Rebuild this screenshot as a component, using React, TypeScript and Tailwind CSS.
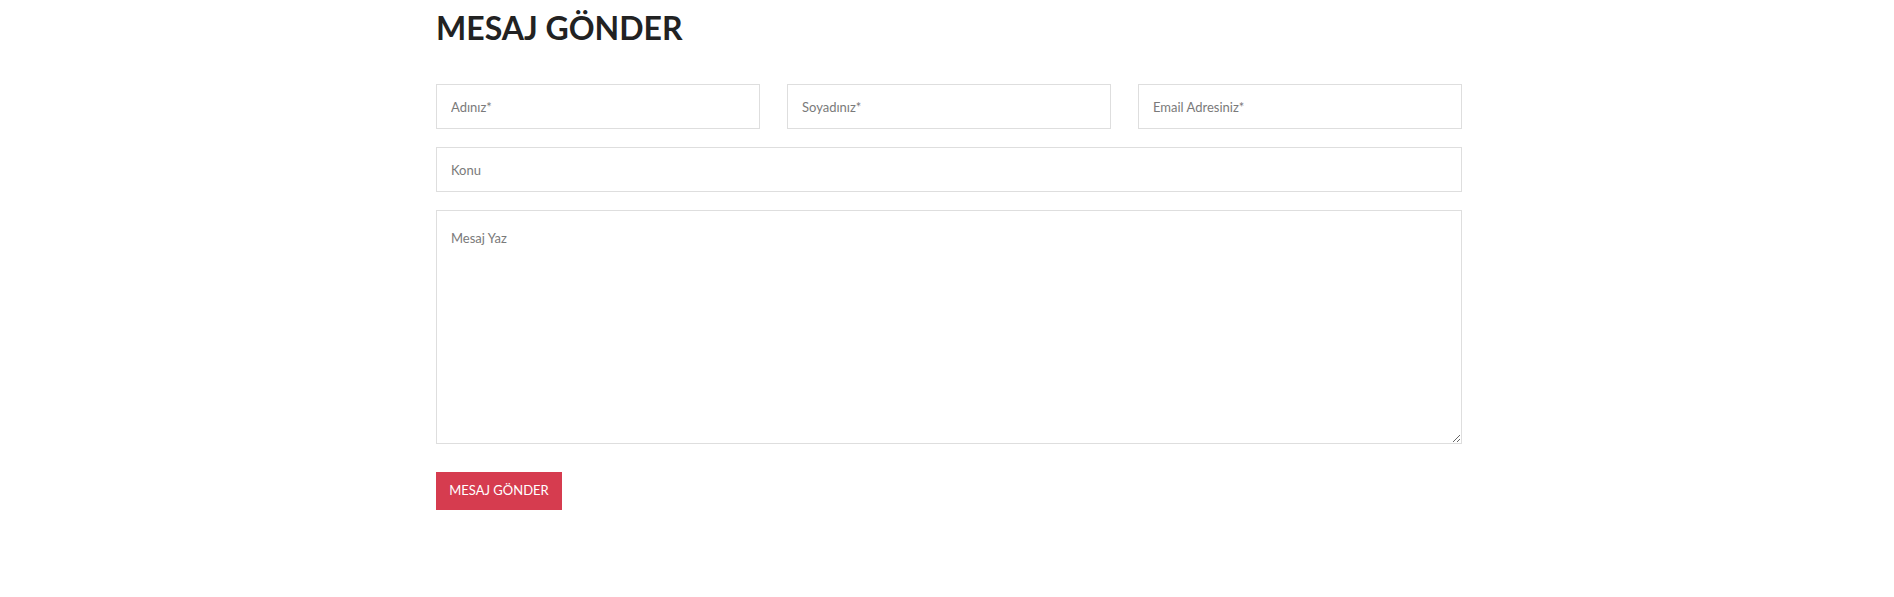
import type { FC } from "react";

const inputClass =
  "h-[45px] w-full border border-[#dedede] bg-white px-[14px] text-[13px] text-[#555] outline-none placeholder:text-[#7a7a7a]";

const App: FC = () => {
  return (
    <div className="min-h-[597px] bg-white font-['Lato','Open_Sans',sans-serif]">
      <div className="mx-auto w-[1030px] pl-[4px] pt-[8px]">
        <h2 className="text-[32px] font-bold leading-[40px] text-[#222]">MESAJ GÖNDER</h2>
        <form className="mt-[36px] flex flex-col gap-[18px]" onSubmit={(e) => e.preventDefault()}>
          <div className="grid grid-cols-3 gap-[27px]">
            <input className={inputClass} placeholder="Adınız*" />
            <input className={inputClass} placeholder="Soyadınız*" />
            <input className={inputClass} placeholder="Email Adresiniz*" />
          </div>
          <input className={`${inputClass} h-[44px]`} placeholder="Konu" />
          <textarea
            className="h-[234px] w-full border border-[#dedede] bg-white px-[14px] pt-[18px] pb-[14px] text-[13px] text-[#555] outline-none placeholder:text-[#7a7a7a]"
            placeholder="Mesaj Yaz"
          />
          <div className="mt-[10px]">
            <button
              type="submit"
              className="h-[38px] w-[126px] bg-[#d63c4f] text-[13px] uppercase text-white">
              Mesaj Gönder
            </button>
          </div>
        </form>
      </div>
    </div>
  );
};

export default App;
